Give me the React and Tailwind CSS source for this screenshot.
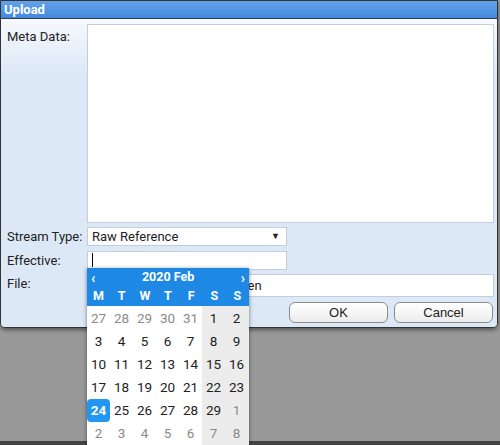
const days = [
  [27, 28, 29, 30, 31, 1, 2],
  [3, 4, 5, 6, 7, 8, 9],
  [10, 11, 12, 13, 14, 15, 16],
  [17, 18, 19, 20, 21, 22, 23],
  [24, 25, 26, 27, 28, 29, 1],
  [2, 3, 4, 5, 6, 7, 8],
];

const isOther = (r, v) => (r === 0 && v > 20) || (r >= 4 && v < 10);

const Calendar = () => (
  <div className="absolute left-[87px] top-[268px] w-[162px] bg-white shadow-[0_1px_4px_rgba(0,0,0,0.5)] font-['Roboto',sans-serif]">
    <div className="bg-[#1e88e5] text-white">
      <div className="h-[19px] flex items-center justify-between px-[4px] leading-none">
        <span className="text-[14px] font-bold">‹</span>
        <span className="text-[12.5px] font-bold">2020 Feb</span>
        <span className="text-[14px] font-bold">›</span>
      </div>
      <div className="h-[19px] grid grid-cols-7 items-center text-[12.5px] font-bold text-center leading-none">
        {['M', 'T', 'W', 'T', 'F', 'S', 'S'].map((d, i) => (
          <span key={i}>{d}</span>
        ))}
      </div>
    </div>
    <div className="pt-[1px] grid grid-cols-[repeat(7,23px)] bg-[linear-gradient(to_right,#fff_115px,#ececec_115px)]">
      {days.map((row, r) =>
        row.map((v, c) => {
          const sel = r === 4 && c === 0;
          return (
            <div key={`${r}-${c}`} className="h-[23px] flex items-center justify-center">
              {sel ? (
                <span className="w-[24px] h-[23px] rounded-[4px] bg-[#2196f3] text-white font-bold text-[13.5px] flex items-center justify-center">
                  {v}
                </span>
              ) : (
                <span className={`text-[13.5px] ${isOther(r, v) ? 'text-[#8a8a8a]' : 'text-[#222]'}`}>{v}</span>
              )}
            </div>
          );
        })
      )}
    </div>
  </div>
);

const Label = ({ children, className = '' }) => (
  <div className={`pl-[6px] text-[13px] text-[#222] ${className}`}>{children}</div>
);

export default function App() {
  return (
    <div className="relative w-[500px] h-[445px] overflow-hidden bg-[#999] flex flex-col font-['Roboto',sans-serif]">
      <div className="w-[498px] h-[328px] border border-[#333] rounded-b-[5px] overflow-hidden flex flex-col shadow-[0_2px_4px_rgba(0,0,0,0.45)]">
        <div className="h-[18px] shrink-0 bg-[linear-gradient(to_bottom,#62a3ea,#4589df)] border-b border-[#2e3d52] px-[3px] flex items-center">
          <span className="text-white font-bold text-[13px] leading-none">Upload</span>
        </div>
        <div className="flex-1 bg-[linear-gradient(to_bottom,#f6f9fd,#dde8f7_55px)] pt-[5px] pr-[3px]">
          <div className="grid grid-cols-[86px_1fr]">
            <Label className="pt-[3px]">Meta Data:</Label>
            <div className="h-[199px] bg-white border border-[#c3cde0]"></div>

            <Label className="flex items-center mt-[4px]">Stream Type:</Label>
            <div className="mt-[4px] w-[200px] h-[19px] bg-white border border-[#c3cde0] flex items-center justify-between pl-[4px] pr-[6px] text-[13px] text-[#222]">
              <span>Raw Reference</span>
              <span className="text-[9px]">▼</span>
            </div>

            <Label className="flex items-center mt-[4px]">Effective:</Label>
            <div className="mt-[4px] w-[200px] h-[19px] bg-white border border-[#c3cde0] flex items-center pl-[4px]">
              <span className="w-px h-[14px] bg-black"></span>
            </div>

            <Label className="flex items-center mt-[4px] pb-[4px]">File:</Label>
            <div className="mt-[4px] h-[23px] bg-white border border-[#c3cde0] flex items-center pl-[91px] text-[13px] text-[#222]">
              <span>No file chosen</span>
            </div>
          </div>
          <div className="flex justify-end gap-[6px] mt-[4px] pr-[1px]">
            {['OK', 'Cancel'].map((t) => (
              <button
                key={t}
                className="w-[99px] h-[21px] rounded-[6px] border border-[#8c8c8c] bg-[linear-gradient(to_bottom,#ffffff,#ececec)] text-[13px] text-[#222] font-['Liberation_Sans',sans-serif] leading-none"
              >
                {t}
              </button>
            ))}
          </div>
        </div>
      </div>
      <div className="flex-1"></div>
      <div className="h-[4px] bg-[#444]"></div>
      <Calendar />
    </div>
  );
}
